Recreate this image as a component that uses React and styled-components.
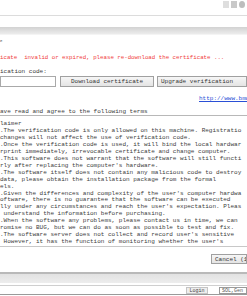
import React from "react";
import styled, { createGlobalStyle } from "styled-components";

const GlobalStyle = createGlobalStyle`
  html, body {
    margin: 0;
    padding: 0;
    background: #ffffff;
  }
  body {
    width: 247px;
    height: 296px;
    overflow: hidden;
    font-family: "Liberation Mono", "DejaVu Sans Mono", monospace;
    color: #3a3a3a;
  }
`;

const Page = styled.div`
  width: 247px;
  height: 296px;
  display: flex;
  flex-direction: column;
  overflow: hidden;
`;

const TopBar = styled.div`
  height: 16px;
  display: flex;
  justify-content: flex-end;
  align-items: flex-start;
  gap: 2px;
  padding: 1px 2px 0 0;
  box-sizing: border-box;
  border-bottom: 1px solid #dcdcdc;
`;

const TinyIcon = styled.div`
  width: 6px;
  height: 7px;
  background: ${(p) => p.color || "#d6d6d6"};
  border-radius: ${(p) => (p.round ? "50%" : "0")};
`;

const Gap = styled.div`
  height: ${(p) => p.h}px;
  flex-shrink: 0;
`;

const TitleBand = styled.div`
  height: 7px;
  flex-shrink: 0;
  background: linear-gradient(#d2d2d2, #ececec);
  border-bottom: 1px solid #f4f4f4;
`;

const Label = styled.div`
  font-size: ${(p) => p.size || 6}px;
  line-height: ${(p) => p.lh || 7}px;
  white-space: pre;
  color: ${(p) => p.color || "#3a3a3a"};
  flex-shrink: 0;
`;

const Row = styled.div`
  display: flex;
  align-items: stretch;
  height: 11px;
  flex-shrink: 0;
`;

const Input = styled.div`
  width: 68px;
  box-sizing: border-box;
  border: 1px solid #a9a9a9;
  background: #fff;
  margin-right: 4px;
`;

const Button = styled.div`
  width: ${(p) => p.w}px;
  flex-shrink: 0;
  box-sizing: border-box;
  border: 1px solid #a0a0a0;
  background: linear-gradient(#f6f6f6, #e4e4e4);
  font-size: 6px;
  line-height: 9px;
  text-align: ${(p) => p.align || "center"};
  padding-left: ${(p) => p.pl || 0}px;
  white-space: pre;
  overflow: hidden;
  color: #333;
  margin-right: ${(p) => p.mr || 0}px;
`;

const LinkRow = styled.div`
  display: flex;
  justify-content: flex-start;
  padding-left: 199px;
  overflow: hidden;
  flex-shrink: 0;
`;

const Link = styled.span`
  font-size: 6px;
  line-height: 7px;
  color: #2a4fd6;
  text-decoration: underline;
  white-space: pre;
`;

const Terms = styled.div`
  height: 132px;
  flex-shrink: 0;
  box-sizing: border-box;
  border-top: 1px solid #b8b8b8;
  border-bottom: 1px solid #c8c8c8;
  padding-top: 5px;
  overflow: hidden;
`;

const TermLine = styled.div`
  font-size: 6px;
  line-height: 6.95px;
  white-space: pre;
  color: #404040;
`;

const CancelRow = styled.div`
  display: flex;
  justify-content: flex-end;
  height: 10px;
  flex-shrink: 0;
`;

const StatusBand = styled.div`
  height: 11px;
  flex-shrink: 0;
  box-sizing: border-box;
  border-top: 2px solid #b9b9b9;
  background: linear-gradient(#e2e2e2, #ededed);
`;

const BottomBar = styled.div`
  height: 10px;
  flex-shrink: 0;
  box-sizing: border-box;
  border-top: 1px solid #cfcfcf;
  border-bottom: 1px solid #9a9a9a;
  display: flex;
  justify-content: flex-end;
  align-items: stretch;
  padding-top: 1px;
`;

const SmallButton = styled.div`
  width: 22px;
  box-sizing: border-box;
  border: 1px solid #c4c4c4;
  background: #eeeeee;
  font-size: 5px;
  line-height: 6px;
  text-align: center;
  margin-right: 11px;
  color: #444;
`;

const SmallInput = styled.div`
  width: 28px;
  box-sizing: border-box;
  border: 1px solid #9a9a9a;
  background: #fff;
  font-size: 5px;
  line-height: 6px;
  white-space: pre;
  overflow: hidden;
  padding-left: 2px;
  color: #555;
`;

const terms = [
  "laimer",
  ".The verification code is only allowed on this machine. Registratio",
  "changes will not affect the use of verification code.",
  ".Once the verification code is used, it will bind the local hardwar",
  "rprint immediately, irrevocable certificate and change computer.",
  ".This software does not warrant that the software will still functi",
  "rly after replacing the computer's hardware.",
  ".The software itself does not contain any malicious code to destroy",
  "data, please obtain the installation package from the formal",
  "els.",
  ".Given the differences and complexity of the user's computer hardwa",
  "oftware, there is no guarantee that the software can be executed",
  "lly under any circumstances and reach the user's expectation. Pleas",
  " understand the information before purchasing.",
  ".When the software any problems, please contact us in time, we can",
  "romise no BUG, but we can do as soon as possible to test and fix.",
  ".The software server does not collect and record user's sensitive",
  " However, it has the function of monitoring whether the user's",
];

const App = () => {
  return (
    <Page>
      <GlobalStyle />
      <TopBar>
        <TinyIcon color="#dedede" />
        <TinyIcon color="#c9c9c9" />
        <TinyIcon color="#bdbdbd" round />
      </TopBar>
      <Gap h={11} />
      <TitleBand />
      <Gap h={4} />
      <Label size={4} lh={4}>e</Label>
      <Gap h={12} />
      <Label size={5.75} lh={6} color="#f03c3c">
        icate  invalid or expired, please re-download the certificate ...
      </Label>
      <Gap h={7} />
      <Label>ication code:</Label>
      <Gap h={1} />
      <Row>
        <Input />
        <Button w={94} mr={3}>Download certificate</Button>
        <Button w={90} align="left" pl={3}>Upgrade verification</Button>
      </Row>
      <Gap h={8} />
      <LinkRow>
        <Link>http://www.bmwe</Link>
      </LinkRow>
      <Gap h={6} />
      <Label>ave read and agree to the following terms</Label>
      <Terms>
        {terms.map((t, i) => (
          <TermLine key={i}>{t}</TermLine>
        ))}
      </Terms>
      <Gap h={7} />
      <CancelRow>
        <Button w={36} align="left" pl={3}>Cancel (1</Button>
      </CancelRow>
      <Gap h={8} />
      <StatusBand />
      <Gap h={2} />
      <BottomBar>
        <SmallButton>Login</SmallButton>
        <SmallInput>SOL,Gen Le</SmallInput>
      </BottomBar>
    </Page>
  );
};

export default App;
